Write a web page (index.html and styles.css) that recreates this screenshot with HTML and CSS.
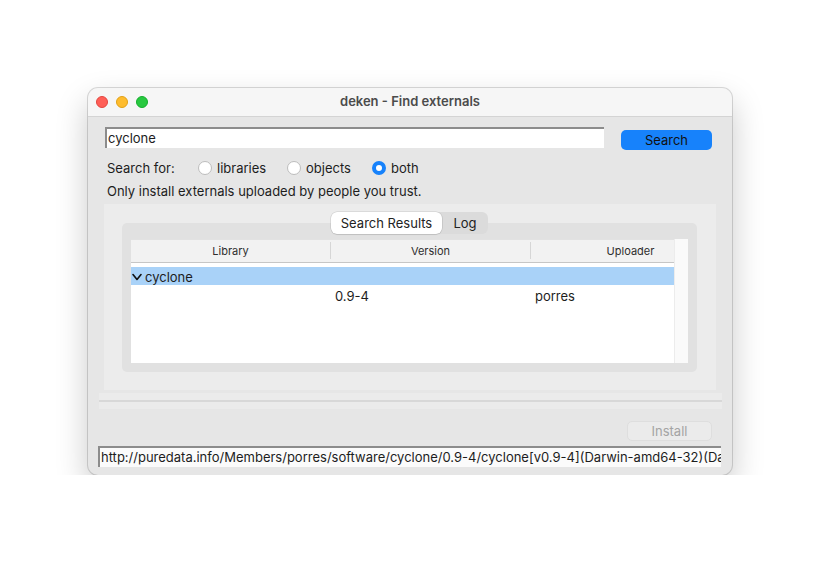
FILE: index.html
```html
<!DOCTYPE html>
<html lang="en">
<head>
  <meta charset="UTF-8">
  <meta name="viewport" content="width=device-width, initial-scale=1.0">
  <title>deken - Find externals</title>
  <link rel="stylesheet" href="styles.css">
</head>
<body>
  <!-- the dialog window -->
  <div class="window">
    <div class="titlebar">
      <div class="lights">
        <span class="light light-close"></span>
        <span class="light light-min"></span>
        <span class="light light-max"></span>
      </div>
      <div class="title">deken - Find externals</div>
      <div></div>
    </div>

    <div class="content">
      <!-- search field + button -->
      <div class="search-row">
        <div class="entry search-entry">cyclone</div>
        <button class="btn btn-blue">Search</button>
      </div>

      <!-- what to search for -->
      <div class="radio-row">
        <span class="radio-label">Search for:</span>
        <label class="option opt-libs"><span class="radio"></span>libraries</label>
        <label class="option opt-objs"><span class="radio"></span>objects</label>
        <label class="option"><span class="radio checked"></span>both</label>
      </div>

      <p class="trust">Only install externals uploaded by people you trust.</p>

      <!-- results notebook -->
      <div class="panel">
        <div class="tabs">
          <div class="segmented">
            <span class="seg seg-active">Search Results</span>
            <span class="seg">Log</span>
          </div>
        </div>
        <div class="tab-frame">
          <div class="table">
            <div class="grid">
              <div class="thead">
                <div class="th">Library</div>
                <div class="th">Version</div>
                <div class="th">Uploader</div>
              </div>
              <div class="tbody">
                <div class="tr tr-selected">
                  <svg class="chevron" width="10" height="8" viewBox="0 0 10 8">
                    <polyline points="1,1.5 5,6.5 9,1.5" fill="none" stroke="#111" stroke-width="1.6" stroke-linecap="round" stroke-linejoin="round"/>
                  </svg>
                  <span>cyclone</span>
                </div>
                <div class="tr">
                  <div class="td"></div>
                  <div class="td">0.9-4</div>
                  <div class="td">porres</div>
                </div>
              </div>
            </div>
            <div class="scrollbar"></div>
          </div>
        </div>
      </div>

      <div class="sash"><div class="sash-line"></div></div>

      <div class="install-row">
        <button class="btn btn-disabled">Install</button>
      </div>

      <div class="entry status">http://puredata.info/Members/porres/software/cyclone/0.9-4/cyclone[v0.9-4](Darwin-amd64-32)(Darwin-arm64-32)</div>
    </div>
  </div>
</body>
</html>
```

FILE: styles.css
```css
body {
  margin: 0;
  padding: 88px 0 0 88px;
  background: #ffffff;
  font-family: Inter, 'Liberation Sans', Arial, sans-serif;
  font-size: 13px;
  color: #1d1d1d;
}

.window {
  width: 644px;
  height: 387px;
  border-radius: 10px;
  overflow: hidden;
  background: #e6e6e6;
  box-shadow: 0 0 0 1px rgba(0, 0, 0, 0.14), 0 14px 32px rgba(0, 0, 0, 0.22);
}

/* title bar */
.titlebar {
  box-sizing: border-box;
  height: 29px;
  display: grid;
  grid-template-columns: 1fr auto 1fr;
  align-items: center;
  background: #f6f6f6;
  border-bottom: 1px solid #d4d4d4;
}

.lights {
  display: flex;
  gap: 8px;
  padding-left: 8px;
}

.light {
  box-sizing: border-box;
  width: 12px;
  height: 12px;
  border-radius: 50%;
}

.light-close { background: #ff5f57; border: 0.5px solid #e2463f; }
.light-min { background: #febc2e; border: 0.5px solid #e1a116; }
.light-max { background: #28c840; border: 0.5px solid #14ae2c; }

.title {
  font-weight: 600;
  color: #4b4b4b;
  line-height: 16px;
  margin-top: -2px;
}

.content {
  display: flex;
  flex-direction: column;
}

/* text entries (tk style sunken border) */
.entry {
  box-sizing: border-box;
  height: 21px;
  line-height: 18px;
  background: #ffffff;
  border-top: 2px solid #8c8c8c;
  border-left: 2px solid #8c8c8c;
  white-space: nowrap;
  overflow: hidden;
}

.search-row {
  display: flex;
  align-items: flex-start;
  margin: 10px 0 0 17px;
}

.search-entry {
  width: 499px;
  padding-left: 1px;
}

.btn {
  box-sizing: border-box;
  height: 20px;
  line-height: 18px;
  border: none;
  border-radius: 5px;
  font-family: inherit;
  font-size: 13px;
  padding: 0;
}

.btn-blue {
  width: 91px;
  margin: 3px 0 0 17px;
  background: #1782fb;
  color: #111;
}

.btn-disabled {
  width: 85px;
  background: #ebebeb;
  border: 1px solid #dedede;
  color: #a4a4a4;
}

/* radio buttons */
.radio-row {
  display: flex;
  align-items: center;
  height: 18px;
  margin: 9px 0 0 19px;
}

.radio-label {
  width: 91px;
}

.option {
  display: flex;
  align-items: center;
  gap: 5px;
}

.opt-libs { width: 89px; }
.opt-objs { width: 85px; }

.radio {
  box-sizing: border-box;
  width: 14px;
  height: 14px;
  border-radius: 50%;
  background: #ffffff;
  border: 1px solid #bdbdbd;
}

.radio.checked {
  border: 4px solid #1782fb;
  background: #ffffff;
}

.trust {
  margin: 6px 0 0 19px;
  line-height: 16px;
}

/* notebook panel */
.panel {
  box-sizing: border-box;
  width: 612px;
  height: 186px;
  margin: 5px 0 0 16px;
  padding: 8px 19px 18px 18px;
  background: #ececec;
}

.tabs {
  position: relative;
  z-index: 1;
  display: flex;
  justify-content: center;
  margin-bottom: -11px;
}

.segmented {
  display: flex;
  height: 22px;
  border-radius: 6px;
  background: #dbdbdb;
}

.seg {
  display: flex;
  align-items: center;
  justify-content: center;
  width: 46px;
  border-radius: 6px;
  color: #222;
}

.seg-active {
  width: 111px;
  background: #ffffff;
  box-shadow: 0 0 0 0.5px rgba(0, 0, 0, 0.15), 0 1px 1px rgba(0, 0, 0, 0.08);
}

.tab-frame {
  height: 149px;
  box-sizing: border-box;
  padding: 16px 9px 9px 9px;
  border-radius: 5px;
  background: #e1e1e1;
}

.table {
  display: flex;
  height: 124px;
  background: #ffffff;
}

.grid {
  flex: 1;
  overflow: hidden;
}

.thead {
  display: flex;
  height: 24px;
  box-sizing: border-box;
  padding: 3px 0;
  background: #f2f2f2;
  border-bottom: 1px solid #c6c6c6;
  box-shadow: inset 0 1px 0 #e2e2e2;
}

.th {
  flex: 0 0 200px;
  box-sizing: border-box;
  text-align: center;
  font-size: 11px;
  line-height: 18px;
  color: #2e2e2e;
  border-right: 1px solid #d6d6d6;
}

.tbody {
  padding-top: 4px;
}

.tr {
  display: flex;
  box-sizing: border-box;
  height: 19px;
  padding-top: 2px;
  align-items: center;
}

.tr-selected {
  height: 18px;
  gap: 3px;
  padding-left: 1px;
  background: #a9d2f8;
}

.td {
  flex: 0 0 200px;
  box-sizing: border-box;
  padding-left: 4px;
}

.scrollbar {
  width: 13px;
  background: #fafafa;
  border-left: 1px solid #ececec;
}

/* paned window sash */
.sash {
  box-sizing: border-box;
  width: 623px;
  height: 16px;
  margin: 3px 0 0 11px;
  padding-top: 7px;
  background: #ebebeb;
}

.sash-line {
  height: 2px;
  background: #d8d8d8;
}

.install-row {
  display: flex;
  justify-content: flex-end;
  margin: 12px 20px 0 0;
}

.status {
  width: 623px;
  margin: 5px 0 0 10px;
  padding-left: 1px;
  background: #fbfbfb;
}
```
